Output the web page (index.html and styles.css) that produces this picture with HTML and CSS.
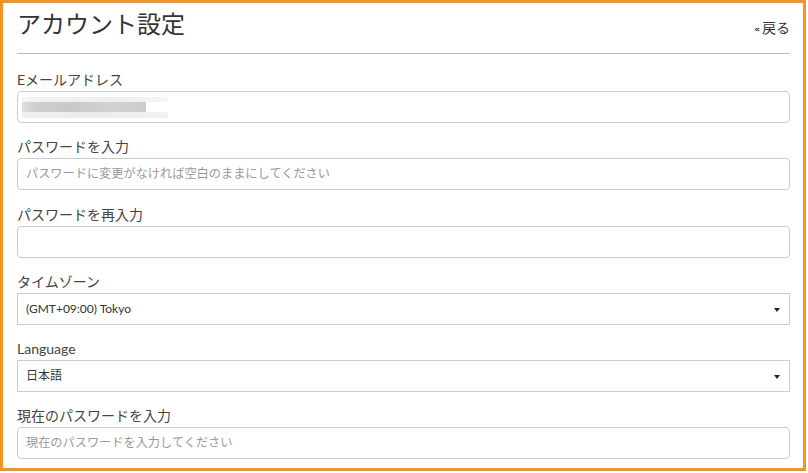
FILE: index.html
```html
<!DOCTYPE html>
<html lang="ja">
<head>
<meta charset="utf-8">
<link rel="stylesheet" href="styles.css">
</head>
<body>
<div class="frame">
  <div class="header">
    <h1 class="title">アカウント設定</h1>
    <a class="back" href="#"><span class="raquo">«</span>戻る</a>
  </div>
  <form class="form">
    <div class="group">
      <label class="label">Eメールアドレス</label>
      <div class="input">
        <div class="blur">
          <span class="band b1"></span>
          <span class="band b2"></span>
          <span class="band b3"></span>
        </div>
      </div>
    </div>
    <div class="group">
      <label class="label">パスワードを入力</label>
      <div class="input placeholder">パスワードに変更がなければ空白のままにしてください</div>
    </div>
    <div class="group">
      <label class="label">パスワードを再入力</label>
      <div class="input"></div>
    </div>
    <div class="group">
      <label class="label">タイムゾーン</label>
      <div class="select">(GMT+09:00) Tokyo<span class="caret"></span></div>
    </div>
    <div class="group">
      <label class="label">Language</label>
      <div class="select">日本語<span class="caret"></span></div>
    </div>
    <div class="group">
      <label class="label">現在のパスワードを入力</label>
      <div class="input placeholder">現在のパスワードを入力してください</div>
    </div>
  </form>
</div>
</body>
</html>
```

FILE: styles.css
```css
* { box-sizing: border-box; }
html, body { margin: 0; padding: 0; background: #fff; }
body {
  font-family: "Lato", "Noto Sans CJK JP", sans-serif;
  color: #333;
}
.frame {
  width: 806px;
  height: 471px;
  border: 3px solid #f7941d;
  padding: 6px 13px 0 14px;
  overflow: hidden;
}
.header {
  display: flex;
  align-items: center;
  justify-content: space-between;
  padding-bottom: 14px;
  border-bottom: 1px solid #bbb;
  box-sizing: content-box;
  height: 30px;
}
.title {
  margin: 0;
  font-size: 24px;
  line-height: 30px;
  font-weight: normal;
  color: #333;
}
.back {
  font-size: 14px;
  line-height: 20px;
  color: #333;
  text-decoration: none;
  margin-top: 8px;
}
.raquo {
  font-family: "DejaVu Sans", sans-serif;
  font-size: 9px;
  font-weight: bold;
  margin-right: 2px;
  vertical-align: 1px;
  color: #333;
}
.form {
  display: flex;
  flex-direction: column;
  padding-top: 16px;
}
.group {
  display: flex;
  flex-direction: column;
  margin-bottom: 14.25px;
}
.label {
  font-size: 14px;
  line-height: 20px;
  font-weight: normal;
  color: #444;
  margin-bottom: 1px;
}
.input {
  height: 32px;
  border: 1px solid #ccc;
  border-radius: 4px;
  padding: 0 8px;
  font-size: 12.2px;
  line-height: 30px;
  display: flex;
  align-items: center;
}
.placeholder { color: #999; }
.blur {
  display: flex;
  flex-direction: column;
  margin-left: -4px;
  width: 146px;
}
.band { display: block; }
.b1 { height: 5px; background: linear-gradient(90deg, #f4f4f4, #eeeeee 60%, #f6f6f6); }
.b2 { height: 10px; width: 124px; background: linear-gradient(90deg, #dedede 0, #cfcfcf 10%, #c8c8c8 40%, #d2d2d2 70%, #cccccc 100%); }
.b3 { height: 6px; background: linear-gradient(90deg, #f0f0f0, #ebebeb 50%, #f3f3f3); }
.select {
  position: relative;
  height: 32px;
  border: 1px solid #ccc;
  padding: 0 8px;
  font-size: 12px;
  line-height: 30px;
  color: #333;
}
.caret {
  position: absolute;
  right: 9px;
  top: 14px;
  width: 0;
  height: 0;
  border-left: 3.5px solid transparent;
  border-right: 3.5px solid transparent;
  border-top: 4px solid #222;
}
```
